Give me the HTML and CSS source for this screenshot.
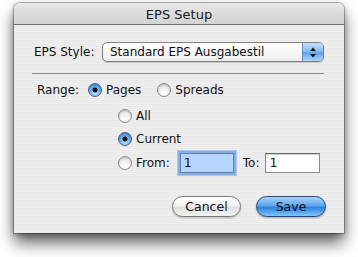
FILE: index.html
```html
<!DOCTYPE html>
<html>
<head>
<meta charset="utf-8">
<link rel="stylesheet" href="styles.css">
</head>
<body>
<div class="window">
  <div class="titlebar">EPS Setup</div>
  <div class="content">
    <div class="row-style">
      <span class="lbl-style">EPS Style:</span>
      <div class="popup">
        <span class="popup-text">Standard EPS Ausgabestil</span>
        <span class="popup-arrows">
          <svg width="8" height="13" viewBox="0 0 8 13"><path d="M4 1.5 L7 5 L1 5 Z M4 11.5 L7 8 L1 8 Z" fill="#111"/></svg>
        </span>
      </div>
    </div>
    <div class="sep"></div>
    <div class="row-range">
      <span class="lbl-range">Range:</span>
      <span class="radio on"></span><span class="rtext">Pages</span>
      <span class="radio spreads"></span><span class="rtext">Spreads</span>
    </div>
    <div class="sub">
      <div class="subrow r-all"><span class="radio"></span><span class="rtext">All</span></div>
      <div class="subrow r-cur"><span class="radio on"></span><span class="rtext">Current</span></div>
      <div class="subrow r-from">
        <span class="radio"></span><span class="rtext">From:</span>
        <span class="field focus"><span class="sel">1</span></span>
        <span class="rtext to">To:</span>
        <span class="field plain">1</span>
      </div>
    </div>
    <div class="buttons">
      <span class="btn cancel">Cancel</span>
      <span class="btn save">Save</span>
    </div>
  </div>
</div>
</body>
</html>
```
FILE: styles.css
```css
html, body {
  margin: 0;
  padding: 0;
  background: #ffffff;
}
body {
  font-family: "DejaVu Sans", "Liberation Sans", sans-serif;
  font-size: 12px;
  color: #111;
  padding-top: 3px;
  min-height: 254px;
}
.window {
  width: 330px;
  height: 230px;
  margin: 0 0 0 14px;
  border-radius: 6px 6px 0 0;
  background:
    repeating-linear-gradient(180deg, #efefef 0 1px, #e9e9e9 1px 2px);
  box-shadow: 0 0 0 1px rgba(0,0,0,0.25), 0 10px 16px rgba(0,0,0,0.6), 0 2px 6px rgba(0,0,0,0.3);
}
.titlebar {
  height: 22px;
  box-sizing: border-box;
  border-bottom: 1px solid #6e6e6e;
  border-radius: 6px 6px 0 0;
  background: linear-gradient(180deg, #e8e8e8 0%, #dcdcdc 50%, #d3d3d3 100%);
  display: flex;
  align-items: center;
  justify-content: center;
  font-size: 13px;
  color: #1a1a1a;
  padding-top: 1px;
}
.content {
  padding: 17px 20px 0 20px;
}
.row-style {
  display: flex;
  align-items: center;
  height: 20px;
}
.lbl-style {
  width: 68px;
  flex: none;
}
.popup {
  flex: 1;
  height: 20px;
  box-sizing: border-box;
  border: 1px solid #7f7f7f;
  border-radius: 5px;
  display: flex;
  overflow: hidden;
  background: linear-gradient(180deg, #ffffff 0%, #f7f7f7 50%, #ededed 100%);
  box-shadow: 0 1px 1px rgba(0,0,0,0.15);
}
.popup-text {
  flex: 1;
  padding-left: 7px;
  line-height: 18px;
  font-size: 12px;
}
.popup-arrows {
  width: 20px;
  flex: none;
  display: flex;
  align-items: center;
  justify-content: center;
  border-left: 1px solid #5f88c4;
  background: linear-gradient(180deg, #c4e0fb 0%, #8cbdf1 45%, #62a2ea 55%, #a8d6fc 100%);
}
.sep {
  height: 1px;
  background: #8c8c8c;
  margin: 11px 0 0 -2px;
}
.row-range {
  display: flex;
  align-items: center;
  height: 14px;
  margin-top: 9px;
}
.lbl-range {
  width: 51px;
  padding-left: 3px;
  flex: none;
}
.radio {
  width: 14px;
  height: 14px;
  flex: none;
  box-sizing: border-box;
  border-radius: 50%;
  border: 1px solid #8a8a8a;
  background: radial-gradient(circle at 50% 75%, #ffffff 0%, #f2f2f2 40%, #d2d2d2 100%);
  box-shadow: inset 0 1px 1px rgba(0,0,0,0.15);
}
.radio.on {
  border-color: #3f5f8f;
  background: radial-gradient(circle at 50% 50%, #111 0 2.2px, transparent 2.8px),
              radial-gradient(circle at 50% 80%, #b7e0ff 0%, #6fb0f0 45%, #3f86dc 100%);
}
.rtext {
  margin-left: 4px;
  line-height: 14px;
}
.radio.spreads {
  margin-left: 16px;
}
.sub {
  margin-left: 84px;
}
.subrow {
  display: flex;
  align-items: center;
}
.r-all { margin-top: 12px; height: 14px; }
.r-cur { margin-top: 9px; height: 14px; }
.r-from { margin-top: 7px; height: 20px; }
.field {
  height: 20px;
  box-sizing: border-box;
  background: #fff;
  border: 1px solid #8a8a8a;
  border-top-color: #6a6a6a;
  box-shadow: inset 0 1px 1px rgba(0,0,0,0.2);
  line-height: 18px;
  padding-left: 3px;
  font-size: 12.5px;
}
.field.focus {
  width: 54px;
  margin-left: 10px;
  background: #b5d5ff;
  border-color: #5f7fa8;
  box-shadow: 0 0 0 2px #84aee6, 0 0 0 3px #a8c8f0;
}
.rtext.to {
  margin-left: 9px;
}
.field.plain {
  width: 55px;
  margin-left: 6px;
}
.buttons {
  display: flex;
  justify-content: flex-end;
  margin-top: 23px;
  margin-right: -2px;
  gap: 15px;
}
.btn {
  height: 21px;
  box-sizing: border-box;
  border-radius: 11px;
  display: flex;
  align-items: center;
  justify-content: center;
  font-size: 12.5px;
}
.cancel {
  width: 69px;
  border: 1px solid #7a7a7a;
  background: linear-gradient(180deg, #ffffff 0%, #f4f4f4 45%, #dedede 55%, #f2f2f2 100%);
  box-shadow: 0 1px 2px rgba(0,0,0,0.25);
}
.save {
  width: 70px;
  border: 1px solid #24487e;
  background: linear-gradient(180deg, #a9d2fb 0%, #5ea6ee 45%, #2f82e0 55%, #7fc4fb 100%);
  box-shadow: 0 1px 2px rgba(0,0,0,0.3);
}
```
